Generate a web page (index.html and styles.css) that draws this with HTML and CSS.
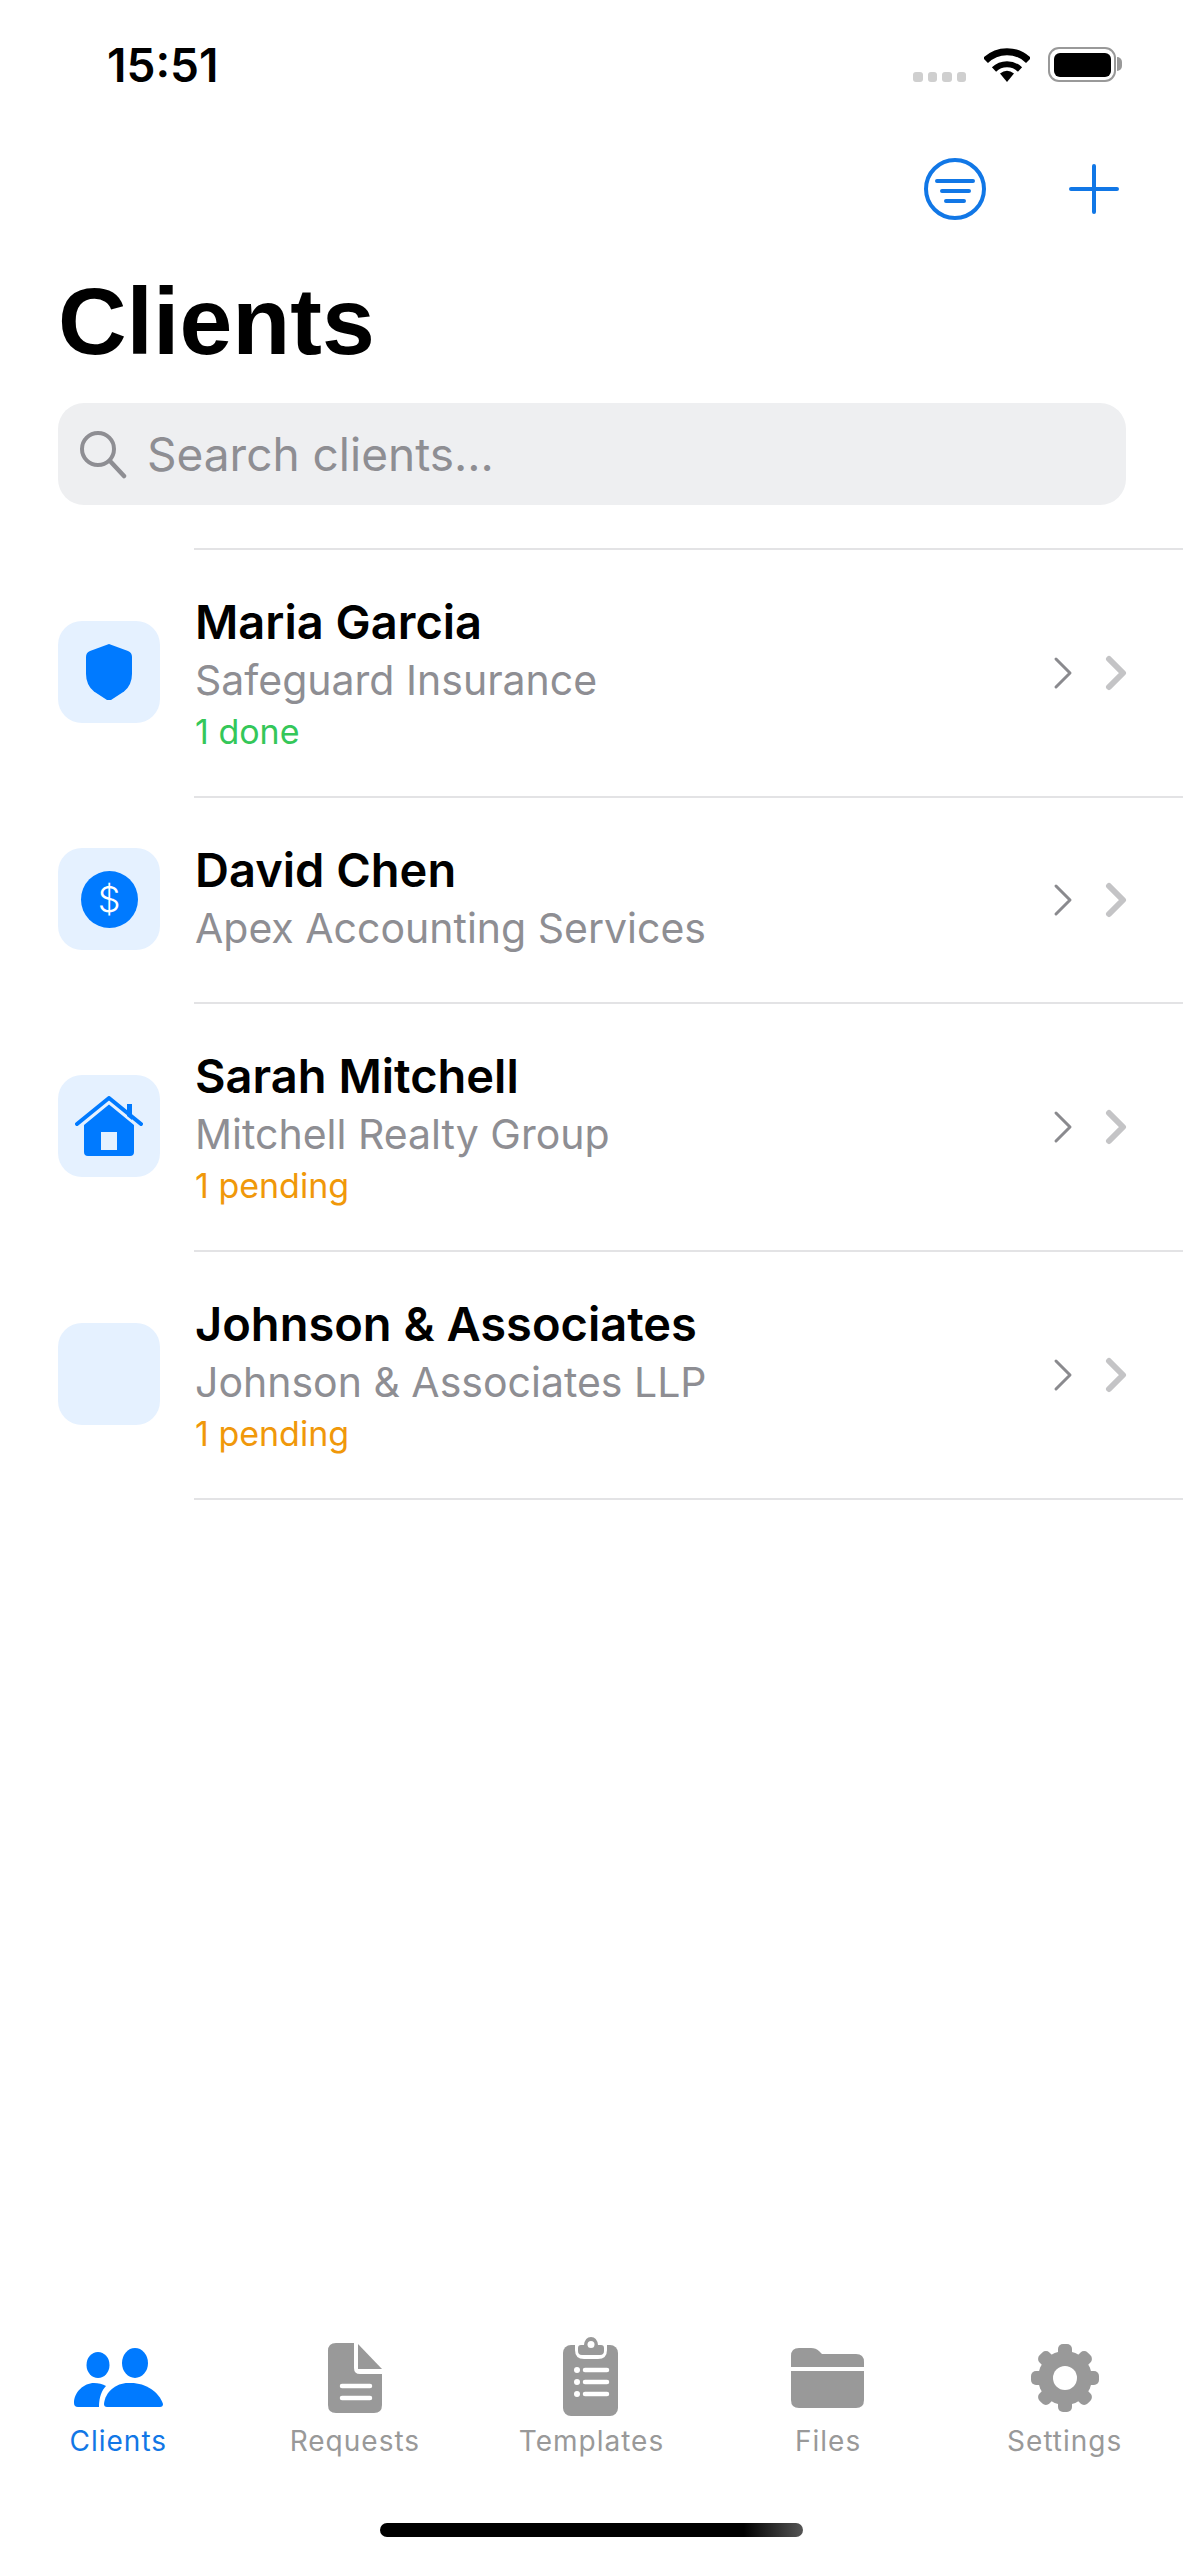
FILE: index.html
```html
<!DOCTYPE html>
<html lang="en">
<head>
<meta charset="utf-8">
<title>Clients</title>
<link rel="stylesheet" href="styles.css">
</head>
<body>
<div class="screen">
  <header class="status-bar">
    <span class="clock">15:51</span>
    <div class="status-icons">
      <div class="signal"><i></i><i></i><i></i><i></i></div>
      <svg class="wifi" width="46" height="35" viewBox="0 0 46 35"><path d="M1.500 13.500a30.500 30.500 0 0 1 43 0" fill="none" stroke="#000" stroke-width="7"/><path d="M10 22.500a18.500 18.500 0 0 1 26 0" fill="none" stroke="#000" stroke-width="6"/><path d="M23 35l-7-8.500q7-5.500 14 0z" fill="#000"/></svg>
      <div class="battery"><div class="battery-level"></div></div>
    </div>
  </header>

  <nav class="nav-actions">
    <svg class="nav-filter" width="64" height="64" viewBox="0 0 64 64"><circle cx="32" cy="32" r="29" fill="none" stroke="#1177e6" stroke-width="4"/><path d="M14 24h36M19 34h27M23 44h18" fill="none" stroke="#1177e6" stroke-width="4" stroke-linecap="round"/></svg>
    <svg class="nav-add" width="50" height="50" viewBox="0 0 50 50"><path d="M25 2v46M2 25h46" fill="none" stroke="#1177e6" stroke-width="4" stroke-linecap="round"/></svg>
  </nav>

  <h1 class="title">Clients</h1>

  <div class="search">
    <svg width="50" height="50" viewBox="0 0 50 50"><circle cx="20" cy="20" r="16" fill="none" stroke="#8e8e93" stroke-width="4"/><path d="M32 32l14 15" fill="none" stroke="#8e8e93" stroke-width="4.500" stroke-linecap="round"/></svg>
    <span>Search clients...</span>
  </div>

  <ul class="client-list">
    <li class="client">
      <div class="client-icon">
        <svg width="46" height="56" viewBox="0 0 46 56"><path d="M23 0l19 7q4 1.500 4 6v17q0 11-8 17.500L25 56q-2 1-4 0L8 47.500Q0 41 0 30V13q0-4.500 4-6z" fill="#007aff"/></svg>
      </div>
      <div class="client-body">
        <div class="client-text">
          <div class="client-name">Maria Garcia</div>
          <div class="client-company">Safeguard Insurance</div>
          <div class="client-state done">1 done</div>
        </div>
        <div class="chevrons">
          <svg class="chevron-thin" width="22" height="34" viewBox="0 0 22 34"><path d="M3 3l14 14L3 31" fill="none" stroke="#8a8a8e" stroke-width="3" stroke-linecap="round" stroke-linejoin="round"/></svg>
          <svg class="chevron-bold" width="24" height="36" viewBox="0 0 24 36"><path d="M4 4l14 14L4 32" fill="none" stroke="#c4c4c6" stroke-width="6" stroke-linecap="round" stroke-linejoin="round"/></svg>
        </div>
      </div>
    </li>
    <li class="client">
      <div class="client-icon">
        <div class="coin">$</div>
      </div>
      <div class="client-body">
        <div class="client-text client-text-short">
          <div class="client-name">David Chen</div>
          <div class="client-company">Apex Accounting Services</div>
        </div>
        <div class="chevrons">
          <svg class="chevron-thin" width="22" height="34" viewBox="0 0 22 34"><path d="M3 3l14 14L3 31" fill="none" stroke="#8a8a8e" stroke-width="3" stroke-linecap="round" stroke-linejoin="round"/></svg>
          <svg class="chevron-bold" width="24" height="36" viewBox="0 0 24 36"><path d="M4 4l14 14L4 32" fill="none" stroke="#c4c4c6" stroke-width="6" stroke-linecap="round" stroke-linejoin="round"/></svg>
        </div>
      </div>
    </li>
    <li class="client">
      <div class="client-icon">
        <svg width="68" height="60" viewBox="0 0 68 60"><path d="M2 28L34 2l32 26" fill="none" stroke="#007aff" stroke-width="4" stroke-linecap="round" stroke-linejoin="round"/><path d="M52 8h5v16l-5-4z" fill="#007aff"/><path fill-rule="evenodd" d="M34 8.500l25 20.500v27q0 4-4 4H13q-4 0-4-4V29zM26 36v18h16V36z" fill="#007aff"/></svg>
      </div>
      <div class="client-body">
        <div class="client-text">
          <div class="client-name">Sarah Mitchell</div>
          <div class="client-company">Mitchell Realty Group</div>
          <div class="client-state pending">1 pending</div>
        </div>
        <div class="chevrons">
          <svg class="chevron-thin" width="22" height="34" viewBox="0 0 22 34"><path d="M3 3l14 14L3 31" fill="none" stroke="#8a8a8e" stroke-width="3" stroke-linecap="round" stroke-linejoin="round"/></svg>
          <svg class="chevron-bold" width="24" height="36" viewBox="0 0 24 36"><path d="M4 4l14 14L4 32" fill="none" stroke="#c4c4c6" stroke-width="6" stroke-linecap="round" stroke-linejoin="round"/></svg>
        </div>
      </div>
    </li>
    <li class="client">
      <div class="client-icon"></div>
      <div class="client-body">
        <div class="client-text">
          <div class="client-name">Johnson &amp; Associates</div>
          <div class="client-company">Johnson &amp; Associates LLP</div>
          <div class="client-state pending">1 pending</div>
        </div>
        <div class="chevrons">
          <svg class="chevron-thin" width="22" height="34" viewBox="0 0 22 34"><path d="M3 3l14 14L3 31" fill="none" stroke="#8a8a8e" stroke-width="3" stroke-linecap="round" stroke-linejoin="round"/></svg>
          <svg class="chevron-bold" width="24" height="36" viewBox="0 0 24 36"><path d="M4 4l14 14L4 32" fill="none" stroke="#c4c4c6" stroke-width="6" stroke-linecap="round" stroke-linejoin="round"/></svg>
        </div>
      </div>
    </li>
  </ul>

  <footer class="tab-bar">
    <div class="tab active">
      <svg width="100" height="80" viewBox="0 0 100 80"><ellipse cx="30" cy="28" rx="11.500" ry="13" fill="#007aff"/><ellipse cx="67" cy="26" rx="13" ry="15" fill="#007aff"/><path d="M6 66c0-11 10-20 20-20 4 0 9 1 12 3-4 4-7 11-7 21H10q-4 0-4-4z" fill="#007aff"/><path d="M36 67c1-12 12-21 24-21h3c15 0 28 9 32 21q0 3-3 3H39q-3 0-3-3z" fill="#007aff"/></svg>
      <span>Clients</span>
    </div>
    <div class="tab">
      <svg width="100" height="80" viewBox="0 0 100 80"><path d="M31 6h18v25q0 6 6 6h22v31q0 8-8 8H31q-8 0-8-8V14q0-8 8-8z" fill="#999"/><path d="M53 7l24 25H53z" fill="#999"/><path d="M37 49h28M37 61h28" fill="none" stroke="#fff" stroke-width="4.500" stroke-linecap="round"/></svg>
      <span>Requests</span>
    </div>
    <div class="tab">
      <svg width="100" height="80" viewBox="0 0 100 80"><rect x="22" y="8" width="55" height="71" rx="8" fill="#999"/><path d="M34 8v5q0 9 9 9h14q9 0 9-9V8z" fill="#fff"/><path d="M37 11q0-3 3-3h3q1-8 7-8t7 8h3q3 0 3 3v3q0 4-4 4H41q-4 0-4-4z" fill="#999"/><circle cx="50" cy="7.500" r="3.500" fill="#fff"/><circle cx="36" cy="33" r="3" fill="#fff"/><circle cx="36" cy="45" r="3" fill="#fff"/><circle cx="36" cy="57" r="3" fill="#fff"/><path d="M44 33h22M44 45h22M44 57h22" fill="none" stroke="#fff" stroke-width="4.500" stroke-linecap="round"/></svg>
      <span>Templates</span>
    </div>
    <div class="tab">
      <svg width="100" height="80" viewBox="0 0 100 80"><path d="M13 30V19q0-8 8-8h12q5 0 8 3l3 3h34q8 0 8 8v5z" fill="#999"/><path d="M13 34h73v29q0 8-8 8H21q-8 0-8-8z" fill="#999"/></svg>
      <span>Files</span>
    </div>
    <div class="tab">
      <svg width="100" height="80" viewBox="0 0 100 80">
        <g fill="#999">
          <circle cx="50" cy="41" r="27"/>
          <rect x="43" y="7" width="14" height="68" rx="5"/>
          <rect x="43" y="7" width="14" height="68" rx="5" transform="rotate(45 50 41)"/>
          <rect x="43" y="7" width="14" height="68" rx="5" transform="rotate(90 50 41)"/>
          <rect x="43" y="7" width="14" height="68" rx="5" transform="rotate(135 50 41)"/>
        </g>
        <circle cx="50" cy="41" r="12" fill="#fff"/>
      </svg>
      <span>Settings</span>
    </div>
  </footer>
  <div class="home-zone"><div class="home-indicator"></div></div>
</div>
</body>
</html>
```
FILE: styles.css
```css
* {
  box-sizing: border-box;
}

html,
body {
  margin: 0;
  padding: 0;
  background: #fff;
}

.screen {
  width: 1183px;
  height: 2560px;
  display: flex;
  flex-direction: column;
  font-family: Inter, "Liberation Sans", sans-serif;
  color: #000;
  overflow: hidden;
}

/* Status bar */
.status-bar {
  height: 92px;
  padding: 47px 67px 0 107px;
  display: flex;
  justify-content: space-between;
  align-items: flex-start;
}

.clock {
  font-weight: 600;
  font-size: 46px;
  line-height: 36px;
}

.status-icons {
  display: flex;
  align-items: flex-start;
  gap: 18px;
}

.signal {
  display: flex;
  gap: 5px;
  padding-top: 25px;
}

.signal i {
  width: 9.500px;
  height: 9.500px;
  border-radius: 3px;
  background: #cfcfcf;
}

.battery {
  position: relative;
  width: 68px;
  height: 35px;
  padding: 3.500px;
  border: 2.500px solid #999;
  border-radius: 11px;
}

.battery::after {
  content: "";
  position: absolute;
  left: 67px;
  top: 8px;
  width: 5px;
  height: 14px;
  border-radius: 0 7px 7px 0;
  background: #999;
}

.battery-level {
  height: 100%;
  border-radius: 6px;
  background: #000;
}

/* Navigation actions */
.nav-actions {
  height: 64px;
  margin-top: 65px;
  padding-right: 64px;
  display: flex;
  justify-content: flex-end;
  align-items: center;
  gap: 82px;
}

/* Title */
.title {
  margin: 45px 0 0 58px;
  font-family: "Liberation Sans", sans-serif;
  font-weight: 700;
  font-size: 95px;
  line-height: 110px;
  letter-spacing: 0;
}

/* Search field */
.search {
  height: 102px;
  margin: 27px 57px 0 58px;
  padding-left: 20px;
  display: flex;
  align-items: center;
  gap: 19px;
  border-radius: 26px;
  background: #eeeff1;
  color: #8e8e93;
  font-size: 46px;
}

/* Client list */
.client-list {
  list-style: none;
  margin: 43px 0 0;
  padding: 0 0 0 58px;
  position: relative;
}

.client-list::before {
  content: "";
  display: block;
  height: 2px;
  margin-left: 136px;
  background: #e3e3e5;
}

.client {
  display: flex;
  align-items: center;
  gap: 34px;
}

.client-icon {
  flex: none;
  width: 102px;
  height: 102px;
  margin-bottom: 4px;
  display: flex;
  align-items: center;
  justify-content: center;
  border-radius: 24px;
  background: #e5f1ff;
}

.coin {
  width: 57px;
  height: 57px;
  border-radius: 50%;
  background: #007aff;
  color: #fff;
  font-size: 36px;
  font-weight: 300;
  line-height: 57px;
  text-align: center;
}

.client-body {
  flex: 1;
  min-height: 206px;
  display: flex;
  align-items: center;
  justify-content: space-between;
  padding: 41.500px 54px 41.500px 0;
  border-bottom: 2px solid #e3e3e5;
}

.client-text {
  padding-left: 1px;
}

.client-text-short {
  padding-bottom: 3px;
}

.client-name {
  font-size: 47px;
  line-height: 59px;
  font-weight: 560;
}

.client-company {
  font-size: 41px;
  line-height: 58px;
  color: #8e8e93;
}

.client-state {
  font-size: 34px;
  line-height: 46px;
}

.client-state.done {
  color: #34c759;
}

.client-state.pending {
  color: #f0980a;
}

.chevrons {
  display: flex;
  align-items: center;
  gap: 30px;
}

/* Tab bar */
.tab-bar {
  margin-top: auto;
  display: grid;
  grid-template-columns: repeat(5, 1fr);
}

.tab {
  display: flex;
  flex-direction: column;
  align-items: center;
  gap: 7px;
  color: #999;
  font-size: 28px;
  line-height: 34px;
  letter-spacing: 1px;
}

.tab.active {
  color: #1177e6;
}

.home-zone {
  height: 102px;
  display: flex;
  justify-content: center;
  padding-top: 65px;
}

.home-indicator {
  width: 423px;
  height: 14px;
  border-radius: 7px;
  background: linear-gradient(90deg, #000 0 86%, #555 100%);
}
```
